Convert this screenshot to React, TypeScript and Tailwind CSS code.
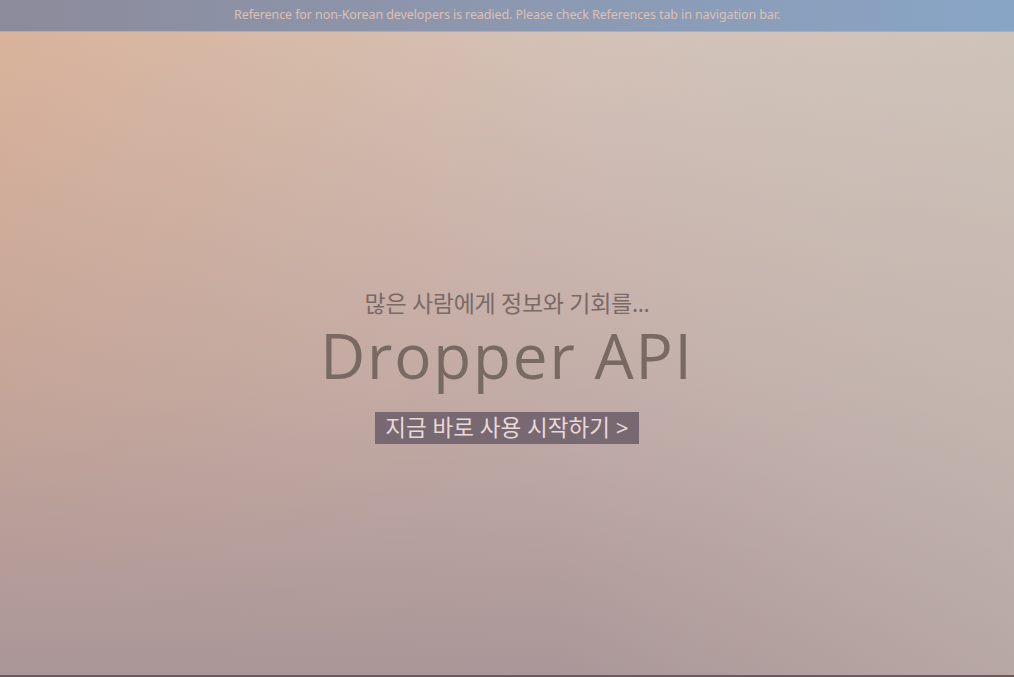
import React from "react";

const App = () => {
  return (
    <div className="flex flex-col w-[1014px] h-[677px] overflow-hidden font-['Noto_Sans','Noto_Sans_CJK_KR',sans-serif]">
      {/* Notice bar */}
      <div className="h-[32px] shrink-0 flex items-center justify-center bg-[linear-gradient(90deg,#8c8b9b_0%,#8c98b0_50%,#88a5c6_100%)] border-b border-[#a6adbd]">
        <p className="text-[12.5px] text-[#dfc0b2] tracking-[-0.1px]">
          Reference for non-Korean developers is readied. Please check References tab in navigation bar.
        </p>
      </div>

      {/* Hero */}
      <div className="relative flex-1 flex flex-col items-center bg-[linear-gradient(90deg,#d9b39b_0%,#d4c1b6_55%,#d3c9c0_100%)]">
        <div className="absolute inset-0 bg-[linear-gradient(180deg,rgba(173,148,150,0)_0%,rgba(173,148,150,0.45)_55%,rgba(170,150,152,1)_100%)]" />
        <div className="absolute inset-0 bg-[linear-gradient(90deg,rgba(0,0,0,0)_0%,rgba(0,0,0,0)_55%,rgba(200,188,178,0.45)_100%)]" />
        <div className="relative flex flex-col items-center pt-[260px]">
          <p className="text-[23px] text-[#7b6966] leading-[23px] tracking-[-0.3px]">
            많은 사람에게 정보와 기회를...
          </p>
          <h1 className="mt-[9px] text-[62px] leading-[62px] text-[#786963] font-['Open_Sans',sans-serif] tracking-[1.8px]">
            Dropper API
          </h1>
          <button className="mt-[26px] h-[32px] px-[10px] bg-[#776872] text-[#e9d9d5] text-[22.5px] leading-none flex items-center">
            지금 바로 사용 시작하기 &gt;
          </button>
        </div>
        <div className="absolute bottom-0 left-0 right-0 h-[2px] bg-[#6c5a60]" />
      </div>
    </div>
  );
};

export default App;
